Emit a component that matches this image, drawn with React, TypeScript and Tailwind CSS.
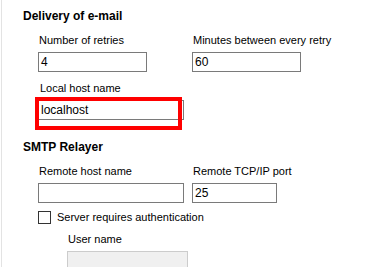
export default function App() {
  return (
    <div className="w-[383px] h-[267px] overflow-hidden bg-white font-['Liberation_Sans',sans-serif] text-[11px] leading-[15px] text-black">
      <div className="ml-px h-full border-l border-[#e3e3e3] pl-[21px] pt-[9px]">
        {/* Delivery section */}
        <h2 className="font-bold text-[12px]">Delivery of e-mail</h2>
        <div className="pl-[15px] pt-[9px]">
          <div className="grid grid-cols-[154px_1fr]">
            <Field label="Number of retries" value="4" width="w-[109px]" />
            <Field label="Minutes between every retry" value="60" width="w-[109px]" />
          </div>
          <div className="mt-[9px]">
            <label className="block pl-[2px]">Local host name</label>
            <div className="relative mt-[4px] w-[146px]">
              <Input value="localhost" width="w-[146px]" />
              <div className="absolute left-[-3px] top-[-3px] w-[147px] h-[33px] border-4 border-[#ff0000]" />
            </div>
          </div>
        </div>

        {/* SMTP Relayer section */}
        <h2 className="mt-[20px] font-bold text-[12px]">SMTP Relayer</h2>
        <div className="pl-[15px] pt-[9px]">
          <div className="grid grid-cols-[154px_1fr]">
            <Field label="Remote host name" value="" width="w-[146px]" />
            <Field label="Remote TCP/IP port" value="25" width="w-[85px]" />
          </div>
          <div className="mt-[7px] flex items-center gap-[6px]">
            <span className="w-[13px] h-[13px] border border-[#333333] bg-white" />
            <span>Server requires authentication</span>
          </div>
          <div className="mt-[7px] pl-[29px]">
            <label className="block pl-[1px]">User name</label>
            <div className="mt-[4px] w-[121px] h-[20px] border border-[#cccccc] bg-[#f0f0f0]" />
          </div>
        </div>
      </div>
    </div>
  )
}

function Field({ label, value, width }: { label: string; value: string; width: string }) {
  return (
    <div>
      <label className="block pl-[1px]">{label}</label>
      <div className="mt-[4px]">
        <Input value={value} width={width} />
      </div>
    </div>
  )
}

function Input({ value, width }: { value: string; width: string }) {
  return (
    <div className={`${width} h-[20px] border border-[#7a7a7a] bg-white px-[2px] text-[12px] leading-[18px]`}>
      {value}
    </div>
  )
}
